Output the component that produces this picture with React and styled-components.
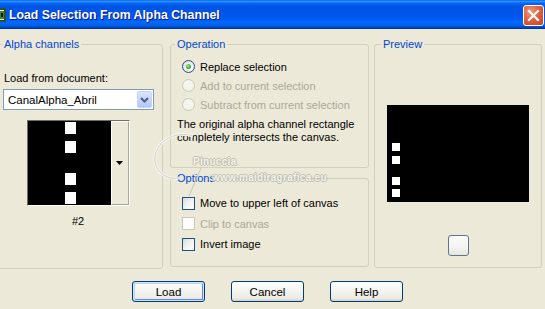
import React from "react";
import styled, { createGlobalStyle } from "styled-components";

const Global = createGlobalStyle`
  html, body { margin: 0; padding: 0; background: #ECE9D8; overflow: hidden; }
  body { font-family: "Liberation Sans", Arial, sans-serif; font-size: 11px; color: #000; }
  * { box-sizing: border-box; }
`;

const Window = styled.div`
  position: relative;
  width: 545px;
  height: 309px;
  background: #ECE9D8;
  overflow: hidden;
`;

const TitleBar = styled.div`
  height: 29px;
  display: flex;
  align-items: center;
  background: linear-gradient(to bottom, #0058ee 0%, #3593ff 4%, #288eff 6%, #127dff 8%, #036ffc 10%, #0262ee 14%, #0057e5 20%, #0054e3 24%, #0055eb 56%, #005bf5 66%, #026afe 76%, #0062ef 86%, #0052d6 92%, #0040ab 96%, #003092 100%);
`;

const AppIcon = styled.svg`
  margin-left: -10px;
  flex: none;
`;

const Title = styled.div`
  margin-left: 3px;
  color: #fff;
  font-family: "Liberation Sans", Arial, sans-serif;
  font-weight: bold;
  font-size: 12.3px;
  text-shadow: 1px 1px 0 #0a1883;
  flex: 1;
  padding-top: 1px;
`;

const CloseButton = styled.div`
  width: 21px;
  height: 21px;
  margin-right: 1px;
  margin-top: 1px;
  border: 1px solid #fff;
  border-radius: 3px;
  background: radial-gradient(circle at 35% 30%, #f39a7c 0%, #e2623f 45%, #c8401e 100%);
  display: flex;
  align-items: center;
  justify-content: center;
`;

const ContentRow = styled.div`
  display: flex;
  align-items: flex-start;
  padding-top: 9px;
  margin-left: -4px;
`;

const Column = styled.div`
  display: flex;
  flex-direction: column;
  width: ${(p) => p.$w}px;
  margin-left: ${(p) => p.$ml || 0}px;
`;

const Group = styled.fieldset`
  margin: 0;
  padding: 0;
  min-width: 0;
  width: 100%;
  height: ${(p) => p.$h}px;
  margin-top: ${(p) => p.$mt || 0}px;
  border: 1px solid #D0D0BF;
  border-radius: 3px;
`;

const Legend = styled.legend`
  margin-left: ${(p) => p.$ml || 4}px;
  padding: 0 2px;
  font-size: 11px;
  line-height: 13px;
  color: #0046D5;
`;

const Inner = styled.div`
  display: flex;
  flex-direction: column;
  align-items: ${(p) => p.$align || "stretch"};
  padding: ${(p) => p.$pad};
`;

const Label = styled.div`
  line-height: 13px;
  margin-bottom: ${(p) => p.$mb || 0}px;
  margin-top: ${(p) => p.$mt || 0}px;
  padding-left: ${(p) => p.$pl ?? 1}px;
  text-align: ${(p) => (p.$center ? "center" : "left")};
`;

const Combo = styled.div`
  width: 151px;
  height: 21px;
  border: 1px solid #7F9DB9;
  background: #fff;
  display: flex;
  align-items: center;
  padding: 1px;
`;

const ComboText = styled.div`
  flex: 1;
  padding-left: 3px;
  font-size: 11.5px;
`;

const ComboButton = styled.div`
  width: 15px;
  height: 17px;
  border: 1px solid #C5D4F6;
  border-radius: 2px;
  background: linear-gradient(to bottom, #D9E4FD 0%, #C5D6FB 50%, #B4C8F6 100%);
  display: flex;
  align-items: center;
  justify-content: center;
`;

const Thumb = styled.div`
  display: flex;
  width: 103px;
  height: 86px;
  margin-top: 10px;
  border: 1px solid;
  border-color: #716F64 #fff #fff #716F64;
  align-self: center;
`;

const ThumbArrow = styled.div`
  width: 18px;
  border-left: 1px solid #fff;
  border-top: 1px solid #fff;
  border-right: 1px solid #ACA899;
  border-bottom: 1px solid #ACA899;
  background: #ECE9D8;
  display: flex;
  align-items: center;
  justify-content: center;
`;

const Row = styled.div`
  display: flex;
  align-items: center;
  height: ${(p) => p.$h || 19}px;
  padding-left: 11px;
  color: ${(p) => (p.$disabled ? "#ACA899" : "#000")};
  gap: 5px;
`;

const Radio = styled.span`
  width: 13px;
  height: 13px;
  border-radius: 50%;
  border: 1px solid ${(p) => (p.$disabled ? "#CAC8BB" : "#1C5180")};
  background: ${(p) =>
    p.$disabled
      ? "#F5F4EA"
      : "radial-gradient(circle at 60% 60%, #ffffff 0%, #f2f1ea 40%, #d6d3c6 100%)"};
  display: flex;
  align-items: center;
  justify-content: center;
  flex: none;
`;

const RadioDot = styled.span`
  width: 5px;
  height: 5px;
  border-radius: 50%;
  background: radial-gradient(circle at 40% 35%, #9BE89B 0%, #3EB03E 55%, #1E8A1E 100%);
`;

const Check = styled.span`
  width: 13px;
  height: 13px;
  border: 1px solid ${(p) => (p.$disabled ? "#CAC8BB" : "#1C5180")};
  background: ${(p) =>
    p.$disabled ? "#fff" : "linear-gradient(135deg, #DCDCD7 0%, #F2F2EE 50%, #ffffff 100%)"};
  flex: none;
`;

const Desc = styled.div`
  line-height: 13px;
  padding-left: 6px;
  margin-top: 4px;
`;

const PreviewPic = styled.svg`
  display: block;
`;

const SmallButton = styled.div`
  width: 21px;
  height: 21px;
  margin-top: 33px;
  border: 1px solid #5F7393;
  border-radius: 3px;
  background: linear-gradient(to bottom, #FBFBF9 0%, #F3F3EF 60%, #E6E5DD 100%);
`;

const ButtonRow = styled.div`
  display: flex;
  gap: 26px;
  padding-top: 12px;
  padding-left: 132px;
`;

const Button = styled.div`
  width: 73px;
  height: 21px;
  border: 1px solid #003C74;
  border-radius: 3px;
  background: linear-gradient(to bottom, #FFFFFF 0%, #F5F5F2 40%, #ECEBE4 85%, #D6D0C5 100%);
  box-shadow: ${(p) =>
    p.$default
      ? "inset 0 0 0 1px #CEE7FF, inset 1px 1px 0 1px #BCD4F6, inset -1px -1px 0 1px #6982EE"
      : "none"};
  display: flex;
  align-items: center;
  justify-content: center;
  font-size: 11.5px;
`;

const Watermark = styled.div`
  position: absolute;
  left: ${(p) => p.$x}px;
  top: ${(p) => p.$y}px;
  font-size: ${(p) => p.$fs}px;
  font-weight: bold;
  color: #F7F6F1;
  text-shadow: 1px 0 0 #B3B0A3, -1px 0 0 #B3B0A3, 0 1px 0 #B3B0A3, 0 -1px 0 #B3B0A3;
  letter-spacing: 0.3px;
  pointer-events: none;
  opacity: 0.75;
`;

const WatermarkCurve = styled.svg`
  position: absolute;
  left: 145px;
  top: 128px;
  pointer-events: none;
`;

export default function App() {
  return (
    <>
      <Global />
      <Window>
        <TitleBar>
          <AppIcon width="16" height="16" viewBox="0 0 16 16">
            <rect x="0" y="1" width="16" height="14" fill="#2f4f2f" />
            <rect x="2" y="3" width="12" height="10" fill="#e8f0e0" />
            <rect x="9" y="4" width="5" height="8" fill="#3a8a3a" />
            <rect x="11" y="6" width="2" height="4" fill="#111" />
          </AppIcon>
          <Title>Load Selection From Alpha Channel</Title>
          <CloseButton>
            <svg width="13" height="13" viewBox="0 0 13 13">
              <path d="M2 2 L11 11 M11 2 L2 11" stroke="#fff" strokeWidth="2.2" strokeLinecap="square" />
            </svg>
          </CloseButton>
        </TitleBar>

        <ContentRow>
          <Column $w={167}>
            <Group $h={231}>
              <Legend $ml={5}>Alpha channels</Legend>
              <Inner $pad="21px 9px 0 6px">
                <Label $mb={4}>Load from document:</Label>
                <Combo>
                  <ComboText>CanalAlpha_Abril</ComboText>
                  <ComboButton>
                    <svg width="9" height="6" viewBox="0 0 9 6">
                      <path d="M1 1 L4.5 4.5 L8 1" fill="none" stroke="#4D6185" strokeWidth="2" />
                    </svg>
                  </ComboButton>
                </Combo>
                <Thumb>
                  <svg width="83" height="84" viewBox="0 0 83 84">
                    <rect width="83" height="84" fill="#000" />
                    <rect x="37" y="1" width="11" height="12" fill="#fff" />
                    <rect x="37" y="20" width="11" height="12" fill="#fff" />
                    <rect x="37" y="52" width="11" height="12" fill="#fff" />
                    <rect x="37" y="71" width="11" height="12" fill="#fff" />
                  </svg>
                  <ThumbArrow>
                    <svg width="7" height="4" viewBox="0 0 7 4">
                      <path d="M0 0 H7 L3.5 4 Z" fill="#000" />
                    </svg>
                  </ThumbArrow>
                </Thumb>
                <Label $mt={9} $center $pl={0}>#2</Label>
              </Inner>
            </Group>
          </Column>

          <Column $w={199} $ml={7}>
            <Group $h={130}>
              <Legend>Operation</Legend>
              <Inner $pad="6px 0 0 0">
                <Row>
                  <Radio><RadioDot /></Radio>
                  Replace selection
                </Row>
                <Row $disabled>
                  <Radio $disabled />
                  Add to current selection
                </Row>
                <Row $disabled>
                  <Radio $disabled />
                  Subtract from current selection
                </Row>
                <Desc>
                  The original alpha channel rectangle
                  <br />
                  completely intersects the canvas.
                </Desc>
              </Inner>
            </Group>
            <Group $h={95} $mt={4}>
              <Legend>Options</Legend>
              <Inner $pad="8px 0 0 0">
                <Row $h={20}>
                  <Check />
                  Move to upper left of canvas
                </Row>
                <Row $h={21} $disabled>
                  <Check $disabled />
                  Clip to canvas
                </Row>
                <Row $h={20}>
                  <Check />
                  Invert image
                </Row>
              </Inner>
            </Group>
          </Column>

          <Column $w={168} $ml={5}>
            <Group $h={230}>
              <Legend $ml={6}>Preview</Legend>
              <Inner $pad="54px 0 0 0" $align="center">
                <PreviewPic width="142" height="97" viewBox="0 0 142 97">
                  <rect width="142" height="97" fill="#000" />
                  <rect x="5" y="38" width="8" height="8" fill="#fff" />
                  <rect x="5" y="51" width="8" height="8" fill="#fff" />
                  <rect x="5" y="72" width="8" height="8" fill="#fff" />
                  <rect x="5" y="84" width="8" height="8" fill="#fff" />
                </PreviewPic>
                <SmallButton />
              </Inner>
            </Group>
          </Column>
        </ContentRow>

        <ButtonRow>
          <Button $default>Load</Button>
          <Button>Cancel</Button>
          <Button>Help</Button>
        </ButtonRow>

        <WatermarkCurve width="70" height="70" viewBox="0 0 70 70">
          <path d="M48 8 C30 2 8 14 10 34 C12 46 24 52 34 50" fill="none" stroke="#F6F5EF" strokeWidth="3" />
          <path d="M48 8 C30 2 8 14 10 34 C12 46 24 52 34 50" fill="none" stroke="#C9C6BA" strokeWidth="0.8" />
          <path d="M56 40 L44 68" fill="none" stroke="#C9C6BA" strokeWidth="1" />
        </WatermarkCurve>
        <Watermark $x={193} $y={156} $fs={10}>Pinuccia</Watermark>
        <Watermark $x={212} $y={172} $fs={10}>www.maidiragrafica.eu</Watermark>
      </Window>
    </>
  );
}
